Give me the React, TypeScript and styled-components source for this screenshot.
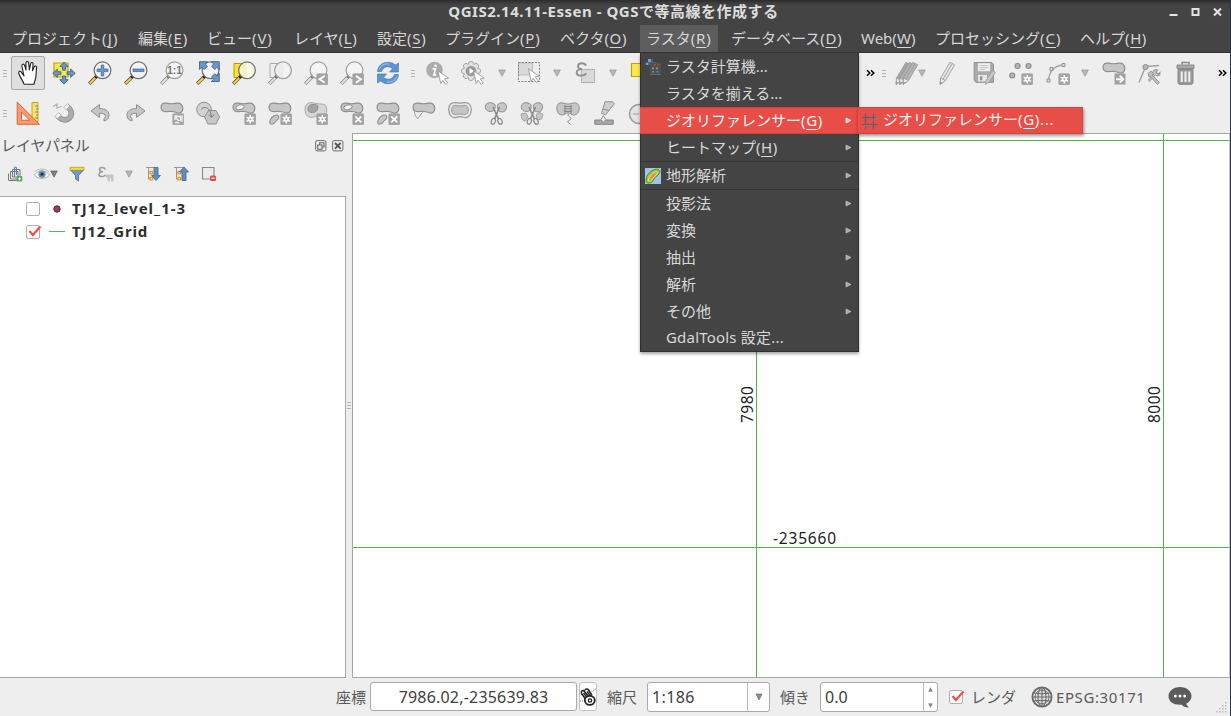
import React from 'react';
import styled, { createGlobalStyle, css } from 'styled-components';

const Global = createGlobalStyle`
  *, *::before, *::after { box-sizing: border-box; }
  html, body { margin: 0; padding: 0; overflow: hidden; }
  body {
    font-family: 'Noto Sans', 'Noto Sans CJK JP', sans-serif;
    font-size: 15px;
    line-height: 20px;
    color: #5a5a5a;
  }
  svg { display: block; flex: none; }
`;

/* ---------- layout ---------- */

const Window = styled.div`
  width: 1231px;
  height: 716px;
  display: flex;
  flex-direction: column;
  background: #eeeeee;
  border-right: 1px solid #2d323b;
  overflow: hidden;
  white-space: nowrap;
`;

const TitleBar = styled.header`
  height: 25px;
  flex: none;
  display: grid;
  grid-template-columns: 1fr auto 1fr;
  align-items: center;
  padding: 0 8px 0 5px;
  background: linear-gradient(#2c2c2c 0, #3c3c3c 3px, #444444 5px);
`;

const Title = styled.h1`
  grid-column: 2;
  margin: 0;
  padding-bottom: 3px;
  font-size: 15px;
  line-height: 22px;
  font-weight: 700;
  color: #dddddd;
  letter-spacing: 0.52px;
`;

const WindowButtons = styled.div`
  justify-self: end;
  display: flex;
  gap: 13px;
`;

const MenuBar = styled.nav`
  height: 28px;
  flex: none;
  display: flex;
  gap: 7px;
  padding-left: 6px;
  background: #444444;
  border-bottom: 1px solid #333333;
`;

const MenuBarItem = styled.div<{ $w: number; $active?: boolean }>`
  width: ${p => p.$w}px;
  flex: none;
  padding-left: 6px;
  line-height: 27px;
  color: #d6d6d6;
  background: ${p => (p.$active ? '#5d5d5d' : 'transparent')};
`;

const Mnemonic = styled.span`
  text-decoration: underline;
  text-decoration-thickness: 1px;
  text-underline-offset: 3px;
`;

const KeyHint = styled.span<{ $ls: number }>`
  letter-spacing: ${p => p.$ls}px;
`;

const ToolBars = styled.div`
  height: 80px;
  flex: none;
  display: flex;
  flex-direction: column;
`;

const ToolRow = styled.div`
  height: 40px;
  display: flex;
  align-items: center;
`;

const Tool = styled.div<{ $w?: number; $active?: boolean }>`
  width: ${p => p.$w ?? 36}px;
  height: 40px;
  flex: none;
  display: flex;
  align-items: center;
  justify-content: center;
  ${p => p.$active && css`
    width: 34px;
    height: 34px;
    margin: 0 1px;
    background: #dfdfdf;
    border: 1px solid #a8a8a8;
    border-radius: 2px;
  `}
`;

const Space = styled.div<{ $w: number }>`
  width: ${p => p.$w}px;
  flex: none;
`;

const Grip = styled.div<{ $w: number }>`
  width: ${p => p.$w}px;
  flex: none;
  display: flex;
  flex-direction: column;
  align-items: center;
  gap: 2px;
  &::before, &::after, & > i {
    content: '';
    width: 4px;
    height: 1px;
    background: #b4b4b4;
  }
`;

const Body = styled.main`
  height: 545px;
  flex: none;
  display: flex;
`;

const Panel = styled.aside`
  width: 346px;
  flex: none;
  display: flex;
  flex-direction: column;
`;

const PanelHeader = styled.div`
  height: 24px;
  display: flex;
  align-items: center;
  gap: 5px;
  padding: 1px 2px 0 1px;
`;

const PanelTitle = styled.span`
  flex: 1;
  padding-bottom: 2px;
  letter-spacing: -0.1px;
`;

const PanelTools = styled.div`
  height: 39px;
  display: flex;
  align-items: center;
  padding: 0 0 5px 7px;
`;

const PanelTool = styled.div<{ $w: number }>`
  width: ${p => p.$w}px;
  flex: none;
`;

const Tree = styled.div`
  flex: 1;
  background: #ffffff;
  border: 1px solid #a6a6a6;
  border-left: 0;
`;

const TreeRow = styled.div`
  height: 23px;
  display: flex;
  align-items: center;
  padding-left: 26px;
  font-weight: 700;
  color: #2e2e2e;
`;

const Check = styled.div`
  width: 14px;
  height: 14px;
  flex: none;
  background: #ffffff;
  border: 1px solid #b0b0b0;
  border-radius: 2px;
  & > svg { overflow: visible; }
`;

const Symbol = styled.div`
  width: 33px;
  display: flex;
  justify-content: center;
`;

const LayerName = styled.span<{ $ls: number }>`
  margin-left: -1px;
  padding-bottom: 2px;
  letter-spacing: ${p => p.$ls}px;
`;

const Splitter = styled.div`
  width: 6px;
  flex: none;
  display: flex;
  align-items: center;
  justify-content: center;
`;

const Canvas = styled.section`
  flex: 1;
  background: #ffffff;
  border: 1px solid #a6a6a6;
  border-right-color: #c4c4c4;
`;

const StatusBar = styled.footer`
  height: 38px;
  flex: none;
  display: flex;
  align-items: flex-start;
  padding: 4px 0 0 336px;
  & > span { line-height: 30px; }
`;

const StatusLabel = styled.span<{ $w: number; $ls?: number }>`
  width: ${p => p.$w}px;
  flex: none;
  letter-spacing: ${p => p.$ls ?? 0}px;
`;

const Field = styled.div<{ $w: number; $center?: boolean; $ls?: number }>`
  width: ${p => p.$w}px;
  height: ${p => (p.$center ? 29 : 30)}px;
  flex: none;
  display: flex;
  align-items: center;
  justify-content: ${p => (p.$center ? 'center' : 'space-between')};
  padding-left: ${p => (p.$center ? 0 : 4)}px;
  background: #ffffff;
  border: 1px solid #a9a9a9;
  border-radius: 3px;
  font-size: 16px;
  color: #404040;
  letter-spacing: ${p => p.$ls ?? 0}px;
`;

const FieldButton = styled.div<{ $w: number }>`
  width: ${p => p.$w}px;
  height: 28px;
  flex: none;
  display: flex;
  flex-direction: column;
  align-items: center;
  justify-content: center;
  gap: 11px;
  border-left: 1px solid #b8b8b8;
`;

const MouseButton = styled.div`
  width: 18px;
  height: 29px;
  margin: 0 10px 0 2px;
  padding-top: 5px;
  background: #fbfbfb;
  border: 1px solid #c4c4c4;
  border-radius: 3px;
`;

const StatusIcon = styled.div<{ $w: number; $top: number }>`
  width: ${p => p.$w}px;
  flex: none;
  padding-top: ${p => p.$top}px;
`;

/* ---------- popup menus ---------- */

const Popup = styled.div`
  position: absolute;
  left: 640px;
  top: 53px;
  width: 219px;
  height: 299px;
  background: #444444;
  border: 1px solid #303030;
  border-top: 0;
  box-shadow: 0 2px 3px rgba(0, 0, 0, 0.35);
  white-space: nowrap;
`;

const SubPopup = styled.div`
  position: absolute;
  left: 857px;
  top: 107px;
  width: 226px;
  height: 27px;
  display: flex;
  align-items: center;
  background: #e84e48;
  border: 1px solid #dc3f39;
  box-shadow: 1px 2px 3px rgba(0, 0, 0, 0.4);
  color: #f4f4f4;
  line-height: 23px;
  padding-left: 3px;
  gap: 4px;
  white-space: nowrap;
`;

const MenuRow = styled.div<{ $hot?: boolean; $last?: boolean }>`
  height: ${p => (p.$last ? 26 : 27)}px;
  display: grid;
  grid-template-columns: 21px 1fr 8px;
  align-items: center;
  padding: 0 5px 0 4px;
  color: ${p => (p.$hot ? '#f4f4f4' : '#d8d8d8')};
  ${p => p.$hot && css`
    margin: 0 -1px;
    padding: 0 6px 0 5px;
    background: #e84e48;
    border: 1px solid #dc3f39;
    border-right: 0;
    border-left: 0;
  `}
`;

const MenuText = styled.span<{ $ls?: number }>`
  padding-bottom: 2px;
  letter-spacing: ${p => p.$ls ?? 0}px;
`;

const Separator = styled.div`
  height: 1px;
  background: #353535;
`;

/* ---------- icons ---------- */

const G = '#a4a4a4';
const GD = '#8f8f8f';
const GL = '#c6c6c6';
const BLUE = '#6a97c8';
const BLUED = '#3d6591';

type Kids = { children?: React.ReactNode };
const Icon = ({ children, s = 24 }: Kids & { s?: number }) => (
  <svg width={s} height={s} viewBox={`0 0 ${s} ${s}`} fill="none">{children}</svg>
);

const DropArrow = ({ dark }: { dark?: boolean }) => (
  <svg width="8" height="8" viewBox="0 0 8 8">
    <path d="M.7 1h6.6L4 7.2z" fill={dark ? '#7d7d7d' : '#b8b8b8'} stroke={dark ? '#666' : '#999'} strokeWidth=".8" />
  </svg>
);

const Handle = ({ gray }: { gray?: boolean }) => (
  <>
    <path d="M9 15 1.200 22.800" stroke={gray ? '#8c8c8c' : '#4c4c4c'} strokeWidth="3.4" />
    <path d="M7.200 17 1.600 22.600" stroke={gray ? '#e0e0e0' : '#fcca3a'} strokeWidth="2.1" />
    <circle cx="8.400" cy="15.6" r="1.600" fill={gray ? '#777' : '#222'} />
  </>
);

const Lens = ({ gray, fill = '#f4f4f4', cx = 14.5 }: { gray?: boolean; fill?: string; cx?: number }) => (
  <>
    <Handle gray={gray} />
    <circle cx={cx} cy="9.3" r="8.4" fill={fill} stroke={gray ? '#a0a0a0' : '#6e6e6e'} strokeWidth="1.2" />
  </>
);

const Hand = () => (
  <Icon>
    <path
      d="M8 23.2C7 19.5 3.6 16 2.7 12.2c-.4-2 1.7-2.8 2.8-.8L8 15 5.9 5c-.3-2 2-2.6 2.7-.6L10 9 9.9 2c0-2 2.600-2 2.800 0l.6 6.800 1.300-6c.4-1.900 2.700-1.500 2.500.4l-.6 6.600 1.700-3.900c.8-1.700 2.700-.8 2.400.8-.6 3.500-.3 6.500-.8 9.700-.3 2.600-1.600 4.200-1.800 6.800z"
      fill="#fff" stroke="#222" strokeWidth="1.1" strokeLinejoin="round"
    />
  </Icon>
);

const PanSelection = () => (
  <Icon>
    <path d="M2 2h14v14H2z" fill="#fce94f" stroke="#c4a000" strokeWidth="1.2" />
    <g fill={BLUE} stroke={BLUED} strokeWidth=".9" strokeLinejoin="round">
      <path d="M12 1l4.200 4.600H13.500v3.600h-3V5.600H7.800z" />
      <path d="M12 23.200l-4.200-4.600h2.700V15h3v3.600h2.700z" />
      <path d="M.8 12.200 5.400 8v2.700H9v3H5.400v2.700z" />
      <path d="M23.200 12.200 18.600 8v2.700H15v3h3.600v2.700z" />
    </g>
  </Icon>
);

const ZoomSign = ({ plus }: { plus?: boolean }) => (
  <Icon>
    <Lens />
    {plus
      ? <path d="M13.200 8V4h2.600v4H20v2.600h-4.200V15h-2.600v-4.400H9V8z" fill={BLUE} stroke={BLUED} strokeWidth=".7" />
      : <path d="M9 8h11v2.600H9z" fill={BLUE} stroke={BLUED} strokeWidth=".7" />}
  </Icon>
);

const IconText = styled.text`
  font-family: 'Liberation Sans', sans-serif;
  font-weight: 700;
`;

const ZoomNative = () => (
  <Icon>
    <Lens gray />
    <IconText x="14.5" y="13" fontSize="10.5" textAnchor="middle" fill="#777">1:1</IconText>
  </Icon>
);

const ZoomFull = () => (
  <Icon>
    <Lens />
    <g fill={BLUE} stroke={BLUED} strokeWidth=".9" strokeLinejoin="round">
      <path d="M3.500.7h8L9.300 3l2.200 2.200-3.300 3.300L6 6.300 3.500 8.500z" />
      <path d="M23.300.7v8L21 6.300l-2.200 2.200-3.300-3.300L17.700 3 15.500.7z" />
      <path d="M23.300 20.500h-8l2.400-2.300-2.200-2.200 3.300-3.300L21 15l2.300-2.500z" />
    </g>
  </Icon>
);

const ZoomArea = ({ gray }: { gray?: boolean }) => (
  <Icon>
    <path d="M2 2.5h10v14H2z" fill={gray ? '#eee' : '#fce232'} stroke={gray ? '#aaa' : '#b79b00'} />
    <Lens gray={gray} cx={15} fill={gray ? '#ececec' : '#f7f3c4'} />
    <path d="M15 1.5a8 8 0 0 1 0 15.600z" fill={gray ? '#f3f3f3' : '#fbfae8'} />
  </Icon>
);

const Badge = ({ kind }: { kind: 'new' | 'x' | 'lt' | 'gt' | 'rot' }) => (
  <>
    <rect x="12.800" y="12.800" width="10.9" height="10.9" rx="1" fill={G} stroke="#9a9a9a" strokeWidth=".6" />
    {kind === 'new' && <><path d="M18.300 14v8.600M14.600 16.200l7.400 4.200M22 16.200l-7.400 4.200" stroke="#fff" strokeWidth="1.5" /><circle cx="18.300" cy="18.300" r="2.500" fill="#fff" /><circle cx="18.300" cy="18.300" r="1" fill={G} /></>}
    {kind === 'x' && <path d="M15.300 15.300l6 6M21.300 15.300l-6 6" stroke="#fff" strokeWidth="1.8" />}
    {kind === 'lt' && <path d="M20.700 14.800l-5 3.500 5 3.500" stroke="#fff" strokeWidth="2" />}
    {kind === 'gt' && <path d="M15.800 14.800l5 3.500-5 3.500" stroke="#fff" strokeWidth="2" />}
    {kind === 'rot' && <><path d="M14 14h3v5h-3zM20.500 14H23v7h-2.500z" fill="#d5d5d5" /><path d="M15.500 17.500c0-3 5.500-3 5.500 0 0 2.500-4 2.500-3.500 0M15 21.500h4" stroke="#f4f4f4" strokeWidth="1.4" /></>}
  </>
);

const ZoomHistory = ({ dir }: { dir: 'lt' | 'gt' }) => (
  <Icon><Lens gray /><Badge kind={dir} /></Icon>
);

const Refresh = () => (
  <Icon>
    <g fill="#5b95d5" stroke="#3f72ad" strokeWidth=".6" strokeLinejoin="round">
      <path d="M1.500 10.500C2 4.500 6.500 1.300 12 1.300c3 0 5.500.9 7.200 2.800L22.500 2v9h-9l3-3.300C13 4.500 7.500 5 5.500 10.500z" />
      <path d="M22.500 13.500c-.5 6-5 9.200-10.500 9.200-3 0-5.500-.9-7.200-2.800L1.500 22v-9h9l-3 3.300c3.500 3.200 9 2.700 11-2.800z" />
    </g>
    <path d="M3.200 8.500c1.800-4.700 6-6.200 10-5.400M20.800 15.500c-1.800 4.700-6 6.200-10 5.400" stroke="#a4c8ee" />
  </Icon>
);

const Cursor = () => (
  <path d="M12.500 9.800l10.600 7.300-3.900.8 3 4-2 1.500-3-4.100-2 3.300z" fill="#fff" stroke="#9a9a9a" strokeWidth=".9" strokeLinejoin="round" />
);

const Identify = () => (
  <Icon>
    <circle cx="8.500" cy="9" r="8.300" fill="#acacac" />
    <path d="M6.500 7.800h3l-1.600 6h2.300" stroke="#fff" strokeWidth="1.7" /><circle cx="9.600" cy="4.700" r="1.300" fill="#fff" />
    <g transform="translate(-.5 0)"><Cursor /></g>
  </Icon>
);

const GearRun = () => (
  <Icon>
    <g fill="#e4e4e4" stroke="#a0a0a0" strokeWidth=".9">
      {[0, 45, 90, 135, 180, 225, 270, 315].map(a => (
        <circle key={a} cx="10" cy="3" r="2.600" transform={`rotate(${a} 10 10)`} />
      ))}
    </g>
    <circle cx="10" cy="10" r="7" fill="#e4e4e4" />
    <circle cx="10" cy="10" r="5.300" fill="#9b9b9b" />
    <path d="M8.500 7v6l4.500-3z" fill="#fff" />
    <Cursor />
  </Icon>
);

const SelectRect = () => (
  <Icon>
    <path d="M1.500 2h14v12h-14z" fill="#dadada" stroke="#bdbdbd" />
    <path d="M1.500 1.500h21v19h-21z" stroke="#808080" strokeDasharray="2 1.3" />
    <g transform="translate(-1 -2)"><Cursor /></g>
  </Icon>
);

const Expression = () => (
  <Icon>
    <path d="M8.500 8.500h13v13h-13z" fill="#d9d9d9" stroke="#b2b2b2" />
    <path d="M13 4.600C11.500 1.500 5.500 1.500 5 4.800c-.3 2.200 1.700 3.300 4.200 3.300C5.500 8.300 3.300 9.500 3.700 12c.6 3.700 7.300 3.300 9.600.3" stroke="#909090" strokeWidth="1.9" />
  </Icon>
);

const YellowBox = () => (
  <Icon><path d="M2.500 2.500h16v13h-16z" fill="#fce94f" stroke="#c4a000" strokeWidth="1.2" /></Icon>
);

const PencilShape = ({ dx = 0, f = '#e2e2e2' }: { dx?: number; f?: string }) => (
  <g transform={`translate(${dx} 0)`} stroke="#a0a0a0" strokeWidth=".9" strokeLinejoin="round">
    <path d="M14 1.300l4.700 2.500L9.500 19.500l-5.300 3.800L4.500 17z" fill={f} />
    <path d="M4.500 17l5 2.500-5.300 3.800z" fill="#e8e8e8" />
    <path d="M16.300 2.500 7 18.200" />
    <path d="M4.300 21l1.800 1-1.900 1.300z" fill="#888" />
  </g>
);

const Pencils = () => (
  <Icon><PencilShape dx={-2} f="#a4a4a4" /><PencilShape dx={1.500} f="#b0b0b0" /><PencilShape dx={5} f="#b4b4b4" /></Icon>
);
const Pencil = () => <Icon><PencilShape /></Icon>;

const Save = () => (
  <Icon>
    <path d="M1.200 1.500h17.500l1.800 1.800v18H3L1.200 19.500z" fill="#aaa" stroke={GD} />
    <path d="M5 2.200h12v8H5z" fill="#f1f1f1" /><path d="M6.500 4.500h9M6.500 6.500h9M6.500 8.500h6" stroke="#bbb" strokeWidth=".9" />
    <path d="M5 14h9v6.500H5z" fill="#e8e8e8" /><path d="M7 15.300h2.300v4H7z" fill={GD} />
    <path d="M19.500 9.500l3 1.800-6.500 10-3.500 2.200.5-3.800z" fill={GL} stroke="#999" strokeWidth=".8" />
  </Icon>
);

const AddPoints = () => (
  <Icon>
    <g fill="#b4b4b4" stroke="#8a8a8a" strokeWidth="1.1"><circle cx="8.600" cy="5" r="2.500" /><circle cx="19.500" cy="5" r="2.500" /><circle cx="3.200" cy="14.500" r="2.500" /></g>
    <Badge kind="new" />
  </Icon>
);

const AddCurve = () => (
  <Icon>
    <path d="M2.500 20C3 12 6 5 17 4" stroke="#a8a8a8" strokeWidth="1.5" />
    <g fill="#ddd" stroke="#929292"><path d="M1 18h3v3H1zM4 6.500h3v3H4zM16 2.500h3v3h-3z" /></g>
    <Badge kind="new" />
  </Icon>
);

const BLOB = 'M1 6.300C1 3 3.500 1.700 6.500 2.200c3.500.8 6.500.8 10 0 4-.6 6.300 1.600 6.300 5.300 0 3.500-2.500 5.300-5.500 4.300-3.500-1.600-6.300-1.800-9.300-1.300-4 .8-7-.7-7-4.200z';
const Blob = ({ hole }: { hole?: boolean }) => (
  <>
    <path d={BLOB} fill={GL} stroke={GD} strokeWidth="1.2" />
    {hole && <ellipse cx="8" cy="6.300" rx="4.200" ry="2.300" transform="rotate(-15 8 6.300)" fill="#f5f5f5" stroke={GD} />}
  </>
);
const SmallBlob = () => <path d="M2 22.300c-1-2 1-5.500 4-7.500 3-1.500 5.500-.5 4.700 2-.7 2.500-2.700 2.500-3.700 4.500-1.500 2-4 2.300-5 1z" fill={GL} stroke={GD} strokeWidth="1.1" />;

const MoveFeature = () => (
  <Icon><Blob /><path d="M12.500 12.500h11v11h-11z" fill="#a0a0a0" /><path d="M14 18.200h6.500M17.800 14.800l3.400 3.400-3.400 3.400" stroke="#fff" strokeWidth="2" /></Icon>
);

const NodeTool = () => (
  <Icon>
    <path d="M1 21.500 7 7M9 5.500 21 4.500" stroke="#a0a0a0" strokeWidth="1.4" />
    <circle cx="7.500" cy="6" r="2.600" fill="#b5b5b5" stroke="#8f8f8f" />
    <path d="M10.500 20 18 12" stroke="#a0a0a0" strokeWidth="2.6" />
    <path d="M10.500 20 17.500 12.500" stroke="#ddd" strokeWidth=".9" />
    <path d="M15 11.500c0-2.500 2.500-3.500 4.500-2.500L18 11.500l2.500 1.500 1.500-1.500c.5 2.500-2 4-4 3" stroke="#9a9a9a" strokeWidth="1.2" fill="#c4c4c4" />
    <path d="M10 12.500l3-2.500 2.500 2.500-1.500 1.500 7.500 7.500-2 2L12 15l-1 1z" fill="#bdbdbd" stroke="#929292" strokeWidth=".9" />
  </Icon>
);

const Trash = () => (
  <Icon>
    <path d="M8 3.500V1.500h7v2" stroke="#8a8a8a" strokeWidth="1.5" />
    <path d="M3 4h17v3.500H3z" fill="#a8a8a8" stroke="#8a8a8a" />
    <path d="M4 8.500h15V21c0 1.500-.7 2.300-2 2.300H6c-1.300 0-2-.8-2-2.300z" fill="#999" stroke="#888" />
    <path d="M7.700 10.500V21M11.500 10.500V21M15.300 10.500V21" stroke="#efefef" strokeWidth="2.1" />
  </Icon>
);

const SetSquare = () => (
  <Icon>
    <path d="M16 1.500h6v19h-6z" fill="#f8e36c" stroke="#b8a03c" />
    <path d="M19 5h3M20 8h2M19 11h3M20 14h2M19 17h3" stroke="#8d7b32" strokeWidth=".9" />
    <path d="M1.200 1 23.500 23.300H1.200z" fill="#fb9a6c" stroke="#d8683a" strokeLinejoin="round" />
    <path d="M5.500 11l8.300 8.300H5.500z" fill="#eeeeee" stroke="#d8683a" />
  </Icon>
);

const Magnet = () => (
  <Icon>
    <path d="M14.500 5c5.500 4 6 8.500 3.200 11.700-3.200 3.300-8 2.800-12-1.700" stroke="#8f8f8f" strokeWidth="5.600" />
    <path d="M14.500 5c5.500 4 6 8.500 3.200 11.700-3.200 3.300-8 2.800-12-1.700" stroke="#acacac" strokeWidth="4" />
    <path d="M11.800 6.300l3.700-3.600 2.300 2.200-3.700 3.900zM3 15.300l3.800-3.800 2.300 2.400-3.800 3.700z" fill="#f4f4f4" stroke="#aaa" strokeWidth=".8" />
    <path d="M1 5.500l4-2.500v4l4.500-1.500" stroke="#b0b0b0" strokeWidth="1.1" />
  </Icon>
);

const Undo = () => (
  <path d="M3 10l8.500-6.500v4.200c6.500-.5 10 3 9.500 7.300-.3 2.800-2.500 4.500-5 5v-2.500c3-2 1.500-5.500-4.500-5.300v4.300z" fill={GL} stroke={GD} strokeLinejoin="round" />
);

const RotateFeature = () => <Icon><Blob /><Badge kind="rot" /></Icon>;

const Simplify = () => (
  <Icon>
    <circle cx="8" cy="8.500" r="7.300" fill="#d2d2d2" stroke={GD} />
    <path d="M12.500 9.500h7.500l3.500 6.500-3.500 7h-8L8.500 16z" fill="#c6c6c6" stroke={GD} />
    <path d="M5 8.500c3-4 9.500-2.500 10.500 7.500M13 13.500l2.500 3 2.500-3" stroke="#7c7c7c" />
  </Icon>
);

const AddRing = () => <Icon><Blob hole /><Badge kind="new" /></Icon>;
const AddPart = () => <Icon><Blob /><SmallBlob /><Badge kind="new" /></Icon>;
const DelRing = () => <Icon><Blob hole /><Badge kind="x" /></Icon>;
const DelPart = () => <Icon><Blob /><SmallBlob /><Badge kind="x" /></Icon>;
const FillRing = () => (
  <Icon>
    <path d="M1 8.500C1 3.500 4 1.300 8 1.700c4 .5 6 1.500 9.500 1.300 4-.2 5.700 3 5.200 7-.5 3-1.700 3-4 3.500-5 1-6 1.500-9 2.500-5 1.500-8.700-1.500-8.700-7.500z" fill="#d6d6d6" stroke="#a8a8a8" />
    <path d="M4 8c0-3 2-4.500 5-4.500s5 .5 5 2.500c0 3.500-2.500 5.500-5.500 5.500S4 10.500 4 8z" fill="#a4a4a4" stroke={GD} />
    <Badge kind="new" />
  </Icon>
);

const Reshape = () => (
  <Icon>
    <path d="M2 7c0 5 1.500 8.500 3.800 10.700 1.500-2.200 2.700-3.700 4.700-6.200" fill="#eee" stroke="#a0a0a0" />
    <Blob />
  </Icon>
);

const Offset = () => (
  <Icon>
    <path d="M.8 9C.5 3.500 3.500 1 8 1.700c3 .6 5 .6 8 0 4.500-.8 7.500 2 7.300 7.300-.3 6-4 8.700-8 7.300-2.500-1-4.500-.7-7 0C4 17.500 1 14.500.8 9z" fill="#e8e8e8" stroke="#999" strokeWidth="1.2" />
    <path d="M3.700 9c0-3.500 1.500-5 4.500-4.500 3 .5 5 .5 7.600 0 3-.5 4.700 1.500 4.500 4.500-.2 4-2.500 5-5 4.500-3-.7-4.500-.7-7 0-3 .5-4.600-1-4.600-4.500z" fill="#c4c4c4" stroke="#999" />
  </Icon>
);

const Scissors = () => (
  <g stroke="#8b8b8b" strokeWidth="1.3">
    <path d="M9 6l5.500 12M15.500 6l-5 12" strokeWidth="1.7" />
    <ellipse cx="9.300" cy="20.300" rx="2" ry="3" transform="rotate(18 9.300 20.300)" />
    <ellipse cx="16" cy="20.300" rx="2" ry="3" transform="rotate(-24 16 20.300)" />
  </g>
);
const Halves = () => (
  <g fill={GL} stroke={GD}>
    <path d="M1.300 6.500C1 2.800 4 1.300 7 1.800c3 .6 4.500 1.500 4.300 3.700-.2 3-2 5-4.500 5C4 10.700 1.500 9 1.300 6.500z" />
    <path d="M22.500 6c.2-3-2-4.500-4.700-4.200-3 .4-4.500 1.500-4.500 3.700 0 3.500 2 5.500 4.700 5.500 2.500 0 4.500-2 4.500-5z" />
  </g>
);
const Split = () => <Icon><Halves /><Scissors /></Icon>;
const SplitParts = () => (
  <Icon>
    <Halves />
    <path d="M1 13l5-1 2 4-3 4-3-1.500zM16 13.500l4-2 3 2-1.500 4.500-4 1z" fill={GL} stroke="#a0a0a0" />
    <Scissors />
  </Icon>
);
const Merge = () => (
  <Icon>
    <path d="M.8 7C.8 2.500 4 1 8 2.300c2.500 1 5.500 1 8 0 4-1.300 7.200.5 7.300 4.500 0 5-3 7.500-5.800 7.200-2.500-.3-3-2-5.500-2s-3.500 2-6 2C3 14 .8 11.500.8 7z" fill={GL} stroke={GD} />
    <path d="M9 4v9M15 4v9M8 5.500h8M8 8h8M8 10.500h8M12.500 13c-2 2.500 4 3 2 5.500-1.500 1.500-4 1-2 3.300l2 1.500" stroke="#858585" />
  </Icon>
);
const MergeAttr = () => (
  <Icon>
    <path d="M13 .8h7.500l1.800 2-8.800 11-4-1.500z" fill="#cfcfcf" stroke={GD} />
    <path d="M11 8l6 1.500" stroke="#8d8d8d" />
    <path d="M2.800 19h18.400v4.300H2.800z" fill="#a8a8a8" stroke="#868686" />
    <path d="M11.300 14.500l2.500 4-2.500 3-2.300-3z" fill="#eee" stroke="#999" />
  </Icon>
);
const RotateSymbol = () => <Icon><circle cx="11" cy="13" r="9.500" fill="#e2e2e2" stroke="#9a9a9a" strokeWidth="1.5" /><path d="M5 13h6" stroke="#999" /></Icon>;

const Chevrons = () => (
  <svg width="9" height="8" viewBox="0 0 9 8" fill="none"><path d="M1 1.300 3.800 4 1 6.700M5 1.300l2.800 2.700L5 6.700" stroke="#000" strokeWidth="1.5" /></svg>
);

const SmallAddGroup = () => (
  <Icon s={16}>
    <path d="M5.500 3.500H13V10M3.500 5.500V13H10M1.500 7.500v7H10M5.500 3.500v7.500h5M3.500 5.500H11V11" stroke="#7b7b7b" />
    <path d="M7.500 11V2.500c0-2 2-2 2 0V9" stroke="#547fae" strokeWidth="1.1" />
    <rect x="9.700" y="10" width="5.600" height="5.600" rx="1" fill="#62a562" /><path d="M12.500 11.300v3M11 12.800h3" stroke="#fff" />
  </Icon>
);
const Eye = () => (
  <Icon s={16}>
    <path d="M.5 9C4 3.500 11.500 3.300 15.500 9c-4 4.800-11.500 4.500-15 0z" fill="#f7f7f7" stroke="#aaa" strokeWidth=".9" />
    <circle cx="8" cy="8.300" r="3.700" fill="#7e9dbc" /><circle cx="8" cy="8.300" r="2.600" fill="#4f7fae" /><circle cx="8" cy="8.300" r="1.300" fill="#1b2c40" />
    <path d="M.5 6C4 2 11.500 2 15 6" stroke="#bcbcbc" />
  </Icon>
);
const Funnel = () => (
  <Icon s={16}>
    <path d="M1.500 4h13l-5 5.500V15L6.500 13V9.500z" fill="#6c9ccc" stroke="#41698f" strokeWidth=".8" />
    <path d="M1 1.300h14v3H1z" fill="#f7dc38" stroke="#a99522" strokeWidth=".7" />
  </Icon>
);
const ExprFilter = () => (
  <Icon s={16}>
    <path d="M7.500 3.500C6 .8 1.500 1 1.500 3.800c0 1.500 1.500 2 3.500 2-2.800 0-4 1-4 2.800.3 2.600 5 2.500 6.500.2" stroke="#999" strokeWidth="1.5" />
    <path d="M7.500 8.500h8v7h-2.500V12h-1v3.500H9.500V12L7.500 11z" fill="#c5c5c5" />
  </Icon>
);
const TreeArrow = ({ up }: { up?: boolean }) => (
  <Icon s={16}>
    <path d="M1 1.500h9M3.500 1.500v12M3.500 6.500h3M3.500 12.500h3" stroke="#999" />
    <path d="M5 5.300h2.600v2.600H5zM5 11.300h2.600v2.600H5z" fill="#ffe0a8" stroke="#f39a1c" strokeWidth="1.2" />
    <path d={up ? 'M11 1l4.500 5H13v8.500H9V6H6.500z' : 'M11 14.500 6.500 9.500H9V1.500h4v8h2.500z'} fill="#5f8fc2" stroke="#3d6591" strokeWidth=".8" />
  </Icon>
);
const RemoveLayer = () => (
  <Icon s={16}>
    <path d="M1.500 1.500h11.500v11.500h-11.500z" fill="#ececec" stroke="#888" strokeWidth="1.1" />
    <rect x="9" y="9.500" width="6" height="5.500" rx="1.500" fill="#e9413f" /><path d="M10.300 12.200h3.500" stroke="#fff" strokeWidth="1.2" />
  </Icon>
);

const FloatIcon = () => (
  <Icon s={12}><rect x=".6" y=".6" width="10.3" height="10.3" rx="1.5" stroke="#6f6f6f" /><path d="M4.700 5V2.700h4.300V7H7M2.700 5H7v4.200H2.700z" stroke="#666" strokeWidth="1.1" /></Icon>
);
const CloseIcon = () => (
  <Icon s={12}><rect x=".6" y=".6" width="10.3" height="10.3" rx="1.5" stroke="#6f6f6f" /><path d="M3 3l5.600 5.600M8.600 3 3 8.600" stroke="#555" strokeWidth="1.9" /></Icon>
);

const Tick = () => (
  <svg width="14" height="12" viewBox="0 0 14 12" fill="none"><path d="M2.500 5l3.300 4L13.500 0.500" stroke="#f04f49" strokeWidth="2.2" /></svg>
);

const SubArrow = ({ hot }: { hot?: boolean }) => (
  <svg width="7" height="7" viewBox="0 0 7 7"><path d="M1 1l5 2.500L1 6z" fill={hot ? '#f3c4c1' : '#aaa'} stroke={hot ? '#fff' : '#c4c4c4'} strokeWidth=".7" /></svg>
);

const CalcIcon = () => (
  <Icon s={16}>
    <path d="M0 3h3V0h5v3h3v4H8v2H5V6H0z" fill="#44637d" /><path d="M3 0h3v3H3zM1 4h2v2H1zM6 4h2v2H6z" fill="#7d9fba" />
    <path d="M5 4h11v12H5z" fill="#4d4f50" /><path d="M5 15h11v1H5z" fill="#696969" />
    <path d="M9 5h2v1.500H9zM12.500 5h2v1.500h-2z" fill="#e02f35" /><path d="M7 8.500h2V10H7zM11 8.500h2V10h-2z" fill="#54c463" /><path d="M7 12h2v1.500H7zM11.500 12h2v1.500h-2z" fill="#4a93b9" />
  </Icon>
);
const TerrainIcon = () => (
  <Icon s={16}>
    <path d="M0 0h16v16H0z" fill="#9fc5ef" />
    <path d="M1 13C1 7 6 1.500 12 1.200c3.500 0 3.500 3 1.500 5.300-2 2-3.500 2.500-5 5.500-1.500 2.500-3 3-5 3-1.500 0-2.500-.5-2.500-2z" fill="#91cf28" stroke="#3f941e" />
    <path d="M3.300 12.500C3.800 8 8 4 11.500 3.800c2 0 1.300 1.500-.5 3.200-1.500 1.500-3 2.500-4 4.500-1 1.700-3.700 2.500-3.700 1z" fill="#e58a70" stroke="#f4e97a" />
  </Icon>
);
const GridIcon = () => (
  <Icon s={18}>
    <path d="M4.500 1.500V17M12.500 1.500V17M1 5.500h16M1 12.500h16" stroke="#4b6672" strokeWidth="1.2" />
    <path d="M1.500 16.500l4-4M12.500 8.500l4-4" stroke="#b07f7b" strokeWidth="1.2" strokeDasharray="1 1" />
  </Icon>
);

const MouseIcon = () => (
  <svg width="16" height="18" viewBox="0 0 16 18" fill="none">
    <path d="M1.500 5.500C1 3.500 2 2 3.500 2.500L9 9M1.500 5.500 6 11.500M5 2.500c0-2 2.500-2 3.500-.5L12 7.500" stroke="#222" strokeWidth="1.5" />
    <path d="M3.500 5l4 5M7 3.500l3.500 4.500" stroke="#222" strokeWidth="1.3" />
    <ellipse cx="9.800" cy="12.300" rx="5" ry="4.500" fill="#fff" stroke="#222" strokeWidth="1.8" />
    <circle cx="10" cy="12.500" r="1.700" stroke="#222" strokeWidth="1.3" />
    <path d="M0 13h4M11.500 4l4-3" stroke="#777" strokeDasharray="1 1" />
  </svg>
);
const Globe = () => (
  <svg width="22" height="22" viewBox="0 0 22 22" fill="none" stroke="#6a6a6a">
    <circle cx="11" cy="11" r="9.600" strokeWidth="1.9" /><circle cx="11" cy="11" r="7" fill="#dedede" strokeWidth="1" />
    <ellipse cx="11" cy="11" rx="4" ry="9.500" strokeWidth="1.1" /><path d="M11 1v20M1 11h20M3 7c5 1 11 1 16 0M3 15c5-1 11-1 16 0" strokeWidth="1.1" />
  </svg>
);
const Bubble = () => (
  <svg width="24" height="23" viewBox="0 0 24 23">
    <path d="M12 1c6.500 0 11.500 4 11.500 9 0 3.700-2.500 6.300-5.200 7.700.3 1.500 1.400 2.900 3 3.600-3 .4-6-.6-7.600-2.600C6 19.200.5 16 .5 10 .5 5 5.500 1 12 1z" fill="#5c5c5c" />
    <g fill="#fff"><circle cx="7.300" cy="10" r="1.500" /><circle cx="12" cy="10" r="1.500" /><circle cx="16.700" cy="10" r="1.500" /></g>
  </svg>
);

const SizeGripBox = styled.div`
  align-self: flex-end;
  margin: 0 2px 2px auto;
`;
const SizeGrip = () => (
  <svg width="12" height="12" viewBox="0 0 12 12">
    <g fill="#bbb">
      {[0, 1, 2, 3].flatMap(r => Array.from({ length: r + 1 }, (_, i) => (
        <rect key={`${r}-${i}`} x={9 - i * 3} y={r * 3} width="1.5" height="1.5" />
      )))}
    </g>
  </svg>
);

const StepArrow = ({ down, big }: { down?: boolean; big?: boolean }) => (
  <svg width={big ? 8 : 5} height={big ? 8 : 5} viewBox="0 0 8 7"><path d={down ? 'M1 .5h6L4 6.500z' : 'M1 6.500h6L4 .5z'} fill="#8a8a8a" stroke="#707070" strokeWidth=".7" /></svg>
);

/* ---------- data ---------- */

const MENUS = [
  { t: 'プロジェクト', k: 'J', w: 119, ls: 1.2 },
  { t: '編集', k: 'E', w: 62, ls: 0.9 },
  { t: 'ビュー', k: 'V', w: 80, ls: 0.9 },
  { t: 'レイヤ', k: 'L', w: 76, ls: 0.6 },
  { t: '設定', k: 'S', w: 61, ls: 0.7 },
  { t: 'プラグイン', k: 'P', w: 108, ls: 0.8 },
  { t: 'ベクタ', k: 'O', w: 79, ls: 0.7 },
  { t: 'ラスタ', k: 'R', w: 78, ls: 0.9, active: true },
  { t: 'データベース', k: 'D', w: 123, ls: 0.7 },
  { t: 'Web', k: 'W', w: 67, ls: 0.1 },
  { t: 'プロセッシング', k: 'C', w: 138, ls: 1 },
  { t: 'ヘルプ', k: 'H', w: 80, ls: 0.6 },
];

const EDIT_TOOLS = [
  SetSquare, Magnet,
  () => <Icon><Undo /></Icon>,
  () => <Icon><g transform="translate(24 0) scale(-1 1)"><Undo /></g></Icon>,
  RotateFeature, Simplify, AddRing, AddPart, FillRing, DelRing, DelPart,
  Reshape, Offset, Split, SplitParts, Merge, MergeAttr, RotateSymbol,
];

const MapLabel = styled.text`
  font-family: 'Noto Sans', sans-serif;
  font-size: 15.5px;
  fill: #1c1c1c;
`;

export default function App() {
  return (
    <>
      <Global />
      <Window>
        <TitleBar>
          <Title>QGIS2.14.11-Essen - QGSで等高線を作成する</Title>
          <WindowButtons>
            <svg width="9" height="9" viewBox="0 0 9 9"><path d="M.5 6h8v2h-8z" fill="#e4e4e4" /></svg>
            <svg width="9" height="9" viewBox="0 0 9 9"><path d="M1.500 1h6v6h-6z" fill="none" stroke="#e4e4e4" strokeWidth="2" /></svg>
            <svg width="9" height="9" viewBox="0 0 9 9"><path d="M1 .5l7 7M8 .5l-7 7" stroke="#e4e4e4" strokeWidth="2" /></svg>
          </WindowButtons>
        </TitleBar>

        <MenuBar>
          {MENUS.map(m => (
            <MenuBarItem key={m.k} $w={m.w} $active={m.active}>
              {m.t}<KeyHint $ls={m.ls}>(<Mnemonic>{m.k}</Mnemonic>)</KeyHint>
            </MenuBarItem>
          ))}
        </MenuBar>

        <ToolBars>
          <ToolRow>
            <Grip $w={10}><i /></Grip>
            <Tool $active><Hand /></Tool>
            <Tool><PanSelection /></Tool>
            <Tool><ZoomSign plus /></Tool>
            <Tool><ZoomSign /></Tool>
            <Tool><ZoomNative /></Tool>
            <Tool><ZoomFull /></Tool>
            <Tool><ZoomArea /></Tool>
            <Tool><ZoomArea gray /></Tool>
            <Tool><ZoomHistory dir="lt" /></Tool>
            <Tool><ZoomHistory dir="gt" /></Tool>
            <Tool><Refresh /></Tool>
            <Grip $w={14}><i /></Grip>
            <Tool $w={35}><Identify /></Tool>
            <Tool><GearRun /></Tool>
            <Tool $w={21}><DropArrow /></Tool>
            <Tool $w={34}><SelectRect /></Tool>
            <Tool $w={22}><DropArrow /></Tool>
            <Tool $w={34}><Expression /></Tool>
            <Tool $w={22}><DropArrow /></Tool>
            <Tool $w={34}><YellowBox /></Tool>
            <Space $w={203} />
            <Tool $w={18}><Chevrons /></Tool>
            <Grip $w={9}><i /></Grip>
            <Space $w={6} />
            <Tool $w={24}><Pencils /></Tool>
            <Tool $w={8}><DropArrow /></Tool>
            <Space $w={4} />
            <Tool><Pencil /></Tool>
            <Tool $w={37}><Save /></Tool>
            <Tool><AddPoints /></Tool>
            <Tool $w={37}><AddCurve /></Tool>
            <Tool $w={18}><DropArrow /></Tool>
            <Space $w={2} />
            <Tool><MoveFeature /></Tool>
            <Tool><NodeTool /></Tool>
            <Tool $w={35}><Trash /></Tool>
            <Space $w={12} />
            <Tool $w={15}><Chevrons /></Tool>
          </ToolRow>
          <ToolRow>
            <Grip $w={10}><i /></Grip>
            {EDIT_TOOLS.map((T, i) => <Tool key={i}><T /></Tool>)}
          </ToolRow>
        </ToolBars>

        <Body>
          <Panel>
            <PanelHeader>
              <PanelTitle>レイヤパネル</PanelTitle>
              <FloatIcon />
              <CloseIcon />
            </PanelHeader>
            <PanelTools>
              <PanelTool $w={27}><SmallAddGroup /></PanelTool>
              <PanelTool $w={16}><Eye /></PanelTool>
              <PanelTool $w={19}><DropArrow dark /></PanelTool>
              <PanelTool $w={29}><Funnel /></PanelTool>
              <PanelTool $w={27}><ExprFilter /></PanelTool>
              <PanelTool $w={20}><DropArrow /></PanelTool>
              <PanelTool $w={28}><TreeArrow /></PanelTool>
              <PanelTool $w={28}><TreeArrow up /></PanelTool>
              <PanelTool $w={16}><RemoveLayer /></PanelTool>
            </PanelTools>
            <Tree>
              <TreeRow>
                <Check />
                <Symbol><svg width="8" height="8" viewBox="0 0 8 8"><circle cx="4" cy="4" r="3.2" fill="#9c3f60" stroke="#4d2433" /></svg></Symbol>
                <LayerName $ls={1}>TJ12_level_1-3</LayerName>
              </TreeRow>
              <TreeRow>
                <Check><Tick /></Check>
                <Symbol><svg width="16" height="2" viewBox="0 0 16 2"><path d="M0 .5h16" stroke="#55b84c" /></svg></Symbol>
                <LayerName $ls={0.85}>TJ12_Grid</LayerName>
              </TreeRow>
            </Tree>
          </Panel>
          <Splitter>
            <svg width="4" height="8" viewBox="0 0 4 8"><path d="M0 .5h4M0 3.500h4M0 6.500h4" stroke="#b4b4b4" /></svg>
          </Splitter>
          <Canvas>
            <svg width="876" height="543" viewBox="353 134 876 543">
              <path d="M353 140.500h876M353 547.500h876M756.500 134v543M1163.500 134v543" stroke="#4fb545" fill="none" />
              <MapLabel x="773" y="544" textLength="63">-235660</MapLabel>
              <MapLabel x="0" y="0" textLength="37" transform="translate(753 423) rotate(-90)">7980</MapLabel>
              <MapLabel x="0" y="0" textLength="37" transform="translate(1160 423) rotate(-90)">8000</MapLabel>
            </svg>
          </Canvas>
        </Body>

        <StatusBar>
          <StatusLabel $w={34}>座標</StatusLabel>
          <Field $w={207} $center $ls={0.2}>7986.02,-235639.83</Field>
          <MouseButton><MouseIcon /></MouseButton>
          <StatusLabel $w={40}>縮尺</StatusLabel>
          <Field $w={123} $ls={0.4}>1:186<FieldButton $w={22}><StepArrow down big /></FieldButton></Field>
          <Space $w={10} />
          <StatusLabel $w={40}>傾き</StatusLabel>
          <Field $w={118}>0.0<FieldButton $w={14}><StepArrow /><StepArrow down /></FieldButton></Field>
          <Space $w={11} />
          <StatusIcon $w={22} $top={8}><Check><Tick /></Check></StatusIcon>
          <StatusLabel $w={60}>レンダ</StatusLabel>
          <StatusIcon $w={25} $top={4}><Globe /></StatusIcon>
          <StatusLabel $w={112} $ls={0.6}>EPSG:30171</StatusLabel>
          <StatusIcon $w={24} $top={4}><Bubble /></StatusIcon>
          <SizeGripBox><SizeGrip /></SizeGripBox>
        </StatusBar>
      </Window>

      <Popup>
        <MenuRow><CalcIcon /><MenuText>ラスタ計算機...</MenuText></MenuRow>
        <MenuRow><i /><MenuText>ラスタを揃える...</MenuText></MenuRow>
        <MenuRow $hot><i /><MenuText>ジオリファレンサー<KeyHint $ls={0.7}>(<Mnemonic>G</Mnemonic>)</KeyHint></MenuText><SubArrow hot /></MenuRow>
        <MenuRow><i /><MenuText>ヒートマップ<KeyHint $ls={0.5}>(<Mnemonic>H</Mnemonic>)</KeyHint></MenuText><SubArrow /></MenuRow>
        <Separator />
        <MenuRow><TerrainIcon /><MenuText>地形解析</MenuText><SubArrow /></MenuRow>
        <Separator />
        {['投影法', '変換', '抽出', '解析', 'その他'].map(t => (
          <MenuRow key={t}><i /><MenuText>{t}</MenuText><SubArrow /></MenuRow>
        ))}
        <MenuRow $last><i /><MenuText $ls={0.2}>GdalTools 設定...</MenuText></MenuRow>
      </Popup>

      <SubPopup>
        <GridIcon />
        <MenuText>ジオリファレンサー<KeyHint $ls={0.7}>(<Mnemonic>G</Mnemonic>)...</KeyHint></MenuText>
      </SubPopup>
    </>
  );
}
